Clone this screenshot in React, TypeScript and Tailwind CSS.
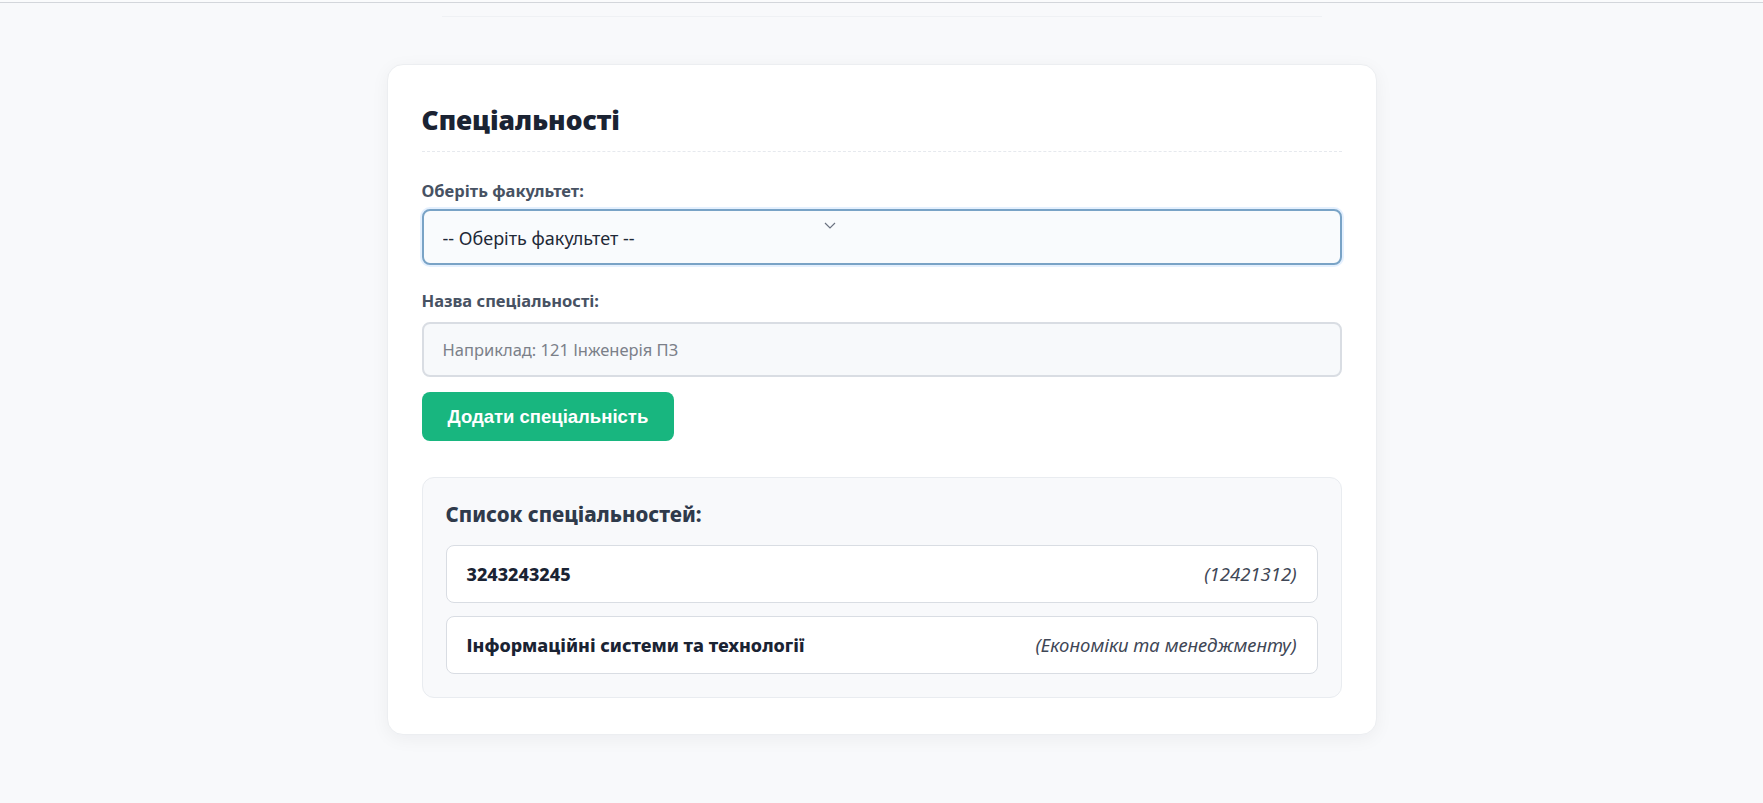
import { useState } from "react";

interface Specialty {
  id: number;
  name: string;
  faculty: string;
}

const initialSpecialties: Specialty[] = [
  { id: 1, name: "3243243245", faculty: "12421312" },
  { id: 2, name: "Інформаційні системи та технології", faculty: "Економіки та менеджменту" },
];

export default function App() {
  const [faculty, setFaculty] = useState("");
  const [name, setName] = useState("");
  const [specialties] = useState<Specialty[]>(initialSpecialties);

  return (
    <div
      className="min-h-screen bg-[#f8f9fb] text-[#1e293b]"
      style={{ fontFamily: '"Noto Sans", "Open Sans", sans-serif' }}
    >
      {/* top edge */}
      <div className="h-[2px] bg-[#fafbfc]" />
      <div className="h-px bg-[#d3d6db]" />
      <div className="mt-[13px] mx-auto w-[880px] h-px bg-[#eff1f4]" />

      <div className="pt-[47px] pb-10">
        <div className="mx-auto w-[990px] bg-white rounded-2xl border border-[#eceef1] shadow-[0_4px_18px_rgba(15,23,42,0.05)] px-[34px] pt-[37px] pb-[36px]">
          {/* Header */}
          <h2 className="text-[26.5px] leading-[36px] font-black text-[#1a2333] pb-[13px] border-b border-dashed border-[#e6e9ee]">
            Спеціальності
          </h2>

          {/* Faculty select */}
          <label className="block mt-[27px] mb-[6px] text-[16.5px] leading-6 font-bold text-[#475263]">
            Оберіть факультет:
          </label>
          <div className="relative">
            <select
              value={faculty}
              onChange={(e) => setFaculty(e.target.value)}
              className="w-full h-[56px] appearance-none rounded-lg border-2 border-[#79a3c6] bg-[#f9fbfd] pl-[19px] pr-4 pt-[2px] text-[18px] text-[#1f2937] shadow-[0_0_0_2px_rgba(147,197,253,0.25)] outline-none"
            >
              <option value="">-- Оберіть факультет --</option>
              <option value="econ">Економіки та менеджменту</option>
            </select>
            <svg
              className="pointer-events-none absolute left-[402px] top-[13px]"
              width="12"
              height="7"
              viewBox="0 0 12 7"
              fill="none"
              stroke="#6b7280"
              strokeWidth="1.2"
            >
              <path d="M1 1l5 5 5-5" />
            </svg>
          </div>

          {/* Specialty name */}
          <label className="block mt-[24px] mb-[9px] text-[16.5px] leading-6 font-bold text-[#475263]">
            Назва спеціальності:
          </label>
          <input
            value={name}
            onChange={(e) => setName(e.target.value)}
            placeholder="Наприклад: 121 Інженерія ПЗ"
            className="w-full h-[55px] rounded-lg border-2 border-[#d9dde3] bg-[#f7f9fb] px-[19px] text-[16.5px] text-[#1f2937] placeholder:text-[#7b8089] outline-none"
          />

          <button
            className="mt-[15px] h-[49px] px-[26px] rounded-lg bg-[#18b67f] text-white text-[18.5px] font-bold"
            style={{ fontFamily: '"Liberation Sans", Arial, sans-serif' }}
          >
            Додати спеціальність
          </button>

          {/* List */}
          <div className="mt-[36px] rounded-xl border border-[#e9ecf0] bg-[#f8f9fb] px-[23px] pt-[22px] pb-[23px]">
            <h3 className="text-[20.5px] leading-[28px] font-extrabold text-[#2f3a4b] mb-[17px]">
              Список спеціальностей:
            </h3>
            <div className="flex flex-col gap-[13px]">
              {specialties.map((s) => (
                <div
                  key={s.id}
                  className="flex items-center justify-between h-[58px] rounded-lg border border-[#d9dde3] bg-white px-[20px]"
                >
                  <span className="text-[18px] font-extrabold text-[#1a2333]">{s.name}</span>
                  <span className="text-[18.5px] italic text-[#3f4756]">({s.faculty})</span>
                </div>
              ))}
            </div>
          </div>
        </div>
      </div>
    </div>
  );
}
